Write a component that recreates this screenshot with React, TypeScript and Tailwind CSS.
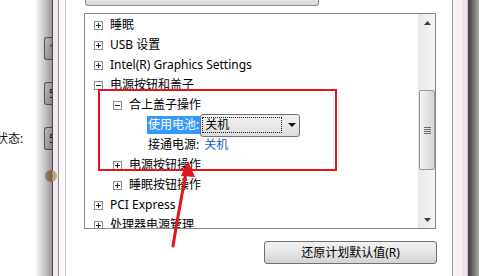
import React from "react";

const font = "font-['Noto_Sans','Noto_Sans_CJK_SC',sans-serif]";

function Expander({ open }: { open?: boolean }) {
    return (
        <svg width="9" height="9" viewBox="0 0 9 9" className="shrink-0">
            <rect x="0.5" y="0.5" width="8" height="8" fill="#fff" stroke="#919191" />
            <line x1="2" y1="4.5" x2="7" y2="4.5" stroke="#222" />
            {!open && <line x1="4.5" y1="2" x2="4.5" y2="7" stroke="#222" />}
        </svg>
    );
}

function Node({ level, open, label }: { level: 1 | 2; open?: boolean; label: string }) {
    const pad = level === 1 ? "pl-[9px]" : "pl-[28px]";
    return (
        <div className={`flex h-5 items-center ${pad}`}>
            <Expander open={open} />
            <span className="ml-[7px] whitespace-nowrap leading-5">{label}</span>
        </div>
    );
}

function LeftTab({ label }: { label: string }) {
    return (
        <div className="ml-auto flex h-[23px] w-[8px] items-center overflow-hidden rounded-l-[3px] border border-r-0 border-[#6f6f6f] bg-linear-to-b from-[#f7f7f7] to-[#d9d9d9] pl-[4px] text-[12px] leading-none text-[#222]">
            {label}
        </div>
    );
}

function Scrollbar() {
    return (
        <div className="flex w-[17px] shrink-0 flex-col border-l border-[#e6e6e6] bg-linear-to-r from-[#e9e9e9] to-[#f5f5f5]">
            <div className="flex h-[17px] items-center justify-center">
                <svg width="7" height="4" viewBox="0 0 7 4">
                    <polygon points="0,4 7,4 3.5,0" fill="#3c3c3c" />
                </svg>
            </div>
            <div className="mt-[59px] flex h-[80px] w-[16px] items-center justify-center rounded-[2px] border border-[#979797] bg-linear-to-r from-[#f3f3f3] to-[#d4d4d4]">
                <div className="flex flex-col gap-[1px]">
                    <div className="h-px w-[7px] bg-[#6a6a6a]" />
                    <div className="h-px w-[7px] bg-[#6a6a6a]" />
                    <div className="h-px w-[7px] bg-[#6a6a6a]" />
                    <div className="h-px w-[7px] bg-[#6a6a6a]" />
                </div>
            </div>
            <div className="mt-auto flex h-[17px] items-center justify-center">
                <svg width="7" height="4" viewBox="0 0 7 4">
                    <polygon points="0,0 7,0 3.5,4" fill="#3c3c3c" />
                </svg>
            </div>
        </div>
    );
}

export default function App() {
    return (
        <div className={`relative flex h-[276px] w-[479px] overflow-hidden bg-white text-[12px] text-black ${font}`}>
            {/* page behind the dialog */}
            <div className="relative flex w-[52px] shrink-0 flex-col gap-[22px] pt-[37px]">
                <LeftTab label="1" />
                <LeftTab label="5" />
                <div className="flex items-center justify-between">
                    <span className="-ml-[4px] whitespace-nowrap leading-none text-[#111]">状态:</span>
                    <LeftTab label="5" />
                </div>
                <div className="-mt-[2px] ml-[45px] h-[12px] w-[12px] rounded-full bg-[#b89358] opacity-80" />
                <div className="pointer-events-none absolute inset-y-0 right-0 w-[17px] bg-linear-to-r from-transparent to-black/40" />
            </div>
            <div className="w-px shrink-0 bg-[#4a4a4a]" />
            <div className="w-[5px] shrink-0 bg-[#f2e8f1]" />
            <div className="w-px shrink-0 bg-[#8c8c8c]" />
            <div className="w-[6px] shrink-0 bg-[#fbfbfb]" />
            <div className="w-px shrink-0 bg-[#c6c6c6]" />

            {/* dialog content */}
            <div className="flex w-[386px] shrink-0 flex-col bg-white">
                <div className="ml-[19px] h-[6px] w-[234px] rounded-b-[3px] border border-t-0 border-[#8e8f8f] bg-linear-to-b from-[#e6e6e6] to-[#d6d6d6]" />
                <div className="ml-[18px] mt-[7px] flex h-[216px] w-[352px] overflow-hidden border border-[#828790]">
                    <div className="flex-1 overflow-hidden pt-[1px]">
                        <Node level={1} label="睡眠" />
                        <Node level={1} label="USB 设置" />
                        <Node level={1} label="Intel(R) Graphics Settings" />
                        <Node level={1} open label="电源按钮和盖子" />
                        <Node level={2} open label="合上盖子操作" />
                        <div className="flex h-5 items-center pl-[62px]">
                            <span className="h-[18px] whitespace-nowrap bg-[#3399ff] px-px leading-[18px] text-white">使用电池:</span>
                            <div className="flex h-[23px] w-[100px] items-center rounded-[3px] border border-[#707070] bg-linear-to-b from-[#f3f3f3] to-[#dcdcdc]">
                                <div className="ml-[1px] flex h-[16px] w-[80px] items-center border border-dotted border-[#222] pl-[2px] leading-none">
                                    关机
                                </div>
                                <svg width="8" height="4" viewBox="0 0 8 4" className="ml-[6px]">
                                    <polygon points="0,0 8,0 4,4" fill="#111" />
                                </svg>
                            </div>
                        </div>
                        <div className="flex h-5 items-center pl-[63px]">
                            <span className="whitespace-nowrap leading-5">接通电源:</span>
                            <span className="ml-[5px] leading-5 text-[#1c62c8]">关机</span>
                        </div>
                        <Node level={2} label="电源按钮操作" />
                        <Node level={2} label="睡眠按钮操作" />
                        <Node level={1} label="PCI Express" />
                        <Node level={1} label="处理器电源管理" />
                    </div>
                    <Scrollbar />
                </div>
                <button className="ml-[198px] mt-[12px] flex h-[23px] w-[173px] items-center justify-center rounded-[3px] border border-[#707070] bg-linear-to-b from-[#f2f2f2] via-[#e6e6e6] to-[#d2d2d2] leading-none text-black">
                    还原计划默认值(R)
                </button>
            </div>

            <div className="w-px shrink-0 bg-[#9c9c9c]" />
            <div className="w-[9px] shrink-0 bg-[#f5f3f5]" />
            <div className="w-[5px] shrink-0 bg-[#f1e4f0]" />
            <div className="w-px shrink-0 bg-[#d8c8d6]" />
            <div className="w-[11px] shrink-0 bg-linear-to-r from-[#3e3e3e] to-[#a8a8a8]" />

            {/* red annotation */}
            <div className="pointer-events-none absolute left-[98px] top-[89px] h-[82px] w-[239px] border-2 border-[#e3141b]" />
            <svg className="pointer-events-none absolute left-0 top-0" width="479" height="276" viewBox="0 0 479 276">
                <path d="M173 246 L177 222 L181 200 L186 172" fill="none" stroke="#e3141b" strokeWidth="3" strokeLinecap="round" />
                <polygon points="188,161 181,176 195,177" fill="#e3141b" />
            </svg>
        </div>
    );
}
